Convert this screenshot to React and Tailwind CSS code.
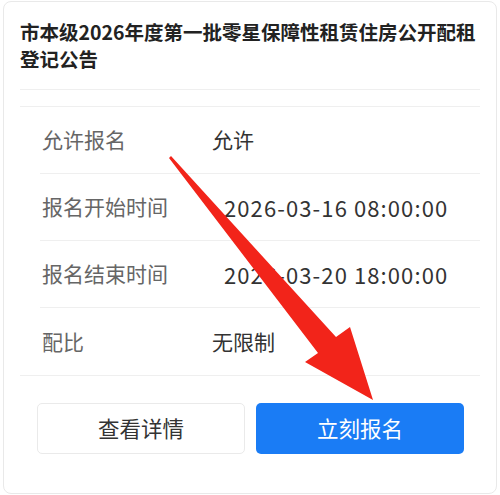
export default function App() {
  const rows = [
    { label: "允许报名", value: "允许", date: false },
    { label: "报名开始时间", value: "2026-03-16 08:00:00", date: true },
    { label: "报名结束时间", value: "2026-03-20 18:00:00", date: true },
    { label: "配比", value: "无限制", date: false },
  ];
  return (
    <div
      className="relative w-[500px] h-[495px] bg-white pt-px px-[3px] overflow-hidden"
      style={{ fontFamily: '"Noto Sans CJK SC", "Noto Sans", sans-serif' }}
    >
      <div className="h-[493px] border border-[#e9e9e9] rounded-[8px] px-4 pt-4">
        <h1 className="text-[19.5px] leading-[27px] font-bold text-[#222] whitespace-nowrap">
          市本级2026年度第一批零星保障性租赁住房公开配租
          <br />
          登记公告
        </h1>
        <div className="mt-[17px] border-t border-[#efefef]" />
        <div className="h-[17px] border-b border-[#efefef]" />
        <div className="border-b border-[#efefef]">
          <div className="pl-5">
            {rows.map((r, i) => (
              <div
                key={r.label}
                className={
                  "h-[67px] flex items-center " +
                  (i < rows.length - 1 ? "border-b border-[#efefef]" : "")
                }
              >
                <div className="w-[172px] pl-[2px] text-[21px] text-[#666]">{r.label}</div>
                {r.date ? (
                  <div className="ml-3 text-[22px] tracking-[1.1px] text-[#333]">{r.value}</div>
                ) : (
                  <div className="text-[21px] text-[#333]">{r.value}</div>
                )}
              </div>
            ))}
          </div>
        </div>
        <div className="mt-[27px] flex gap-[11px] pl-[17px]">
          <button className="w-[208px] h-[51px] rounded-[5px] border border-[#eaeaea] bg-white text-[21.5px] text-[#333]">
            查看详情
          </button>
          <button className="w-[208px] h-[51px] rounded-[5px] bg-[#1a7cf5] text-[21.5px] text-white">
            立刻报名
          </button>
        </div>
      </div>
      <svg className="absolute left-0 top-0 pointer-events-none" width="500" height="495" viewBox="0 0 500 495">
        <polygon
          points="171,156 336,337 350,327 373,400 305,362 318,353 169,158"
          fill="#f2241a"
        />
      </svg>
    </div>
  );
}
